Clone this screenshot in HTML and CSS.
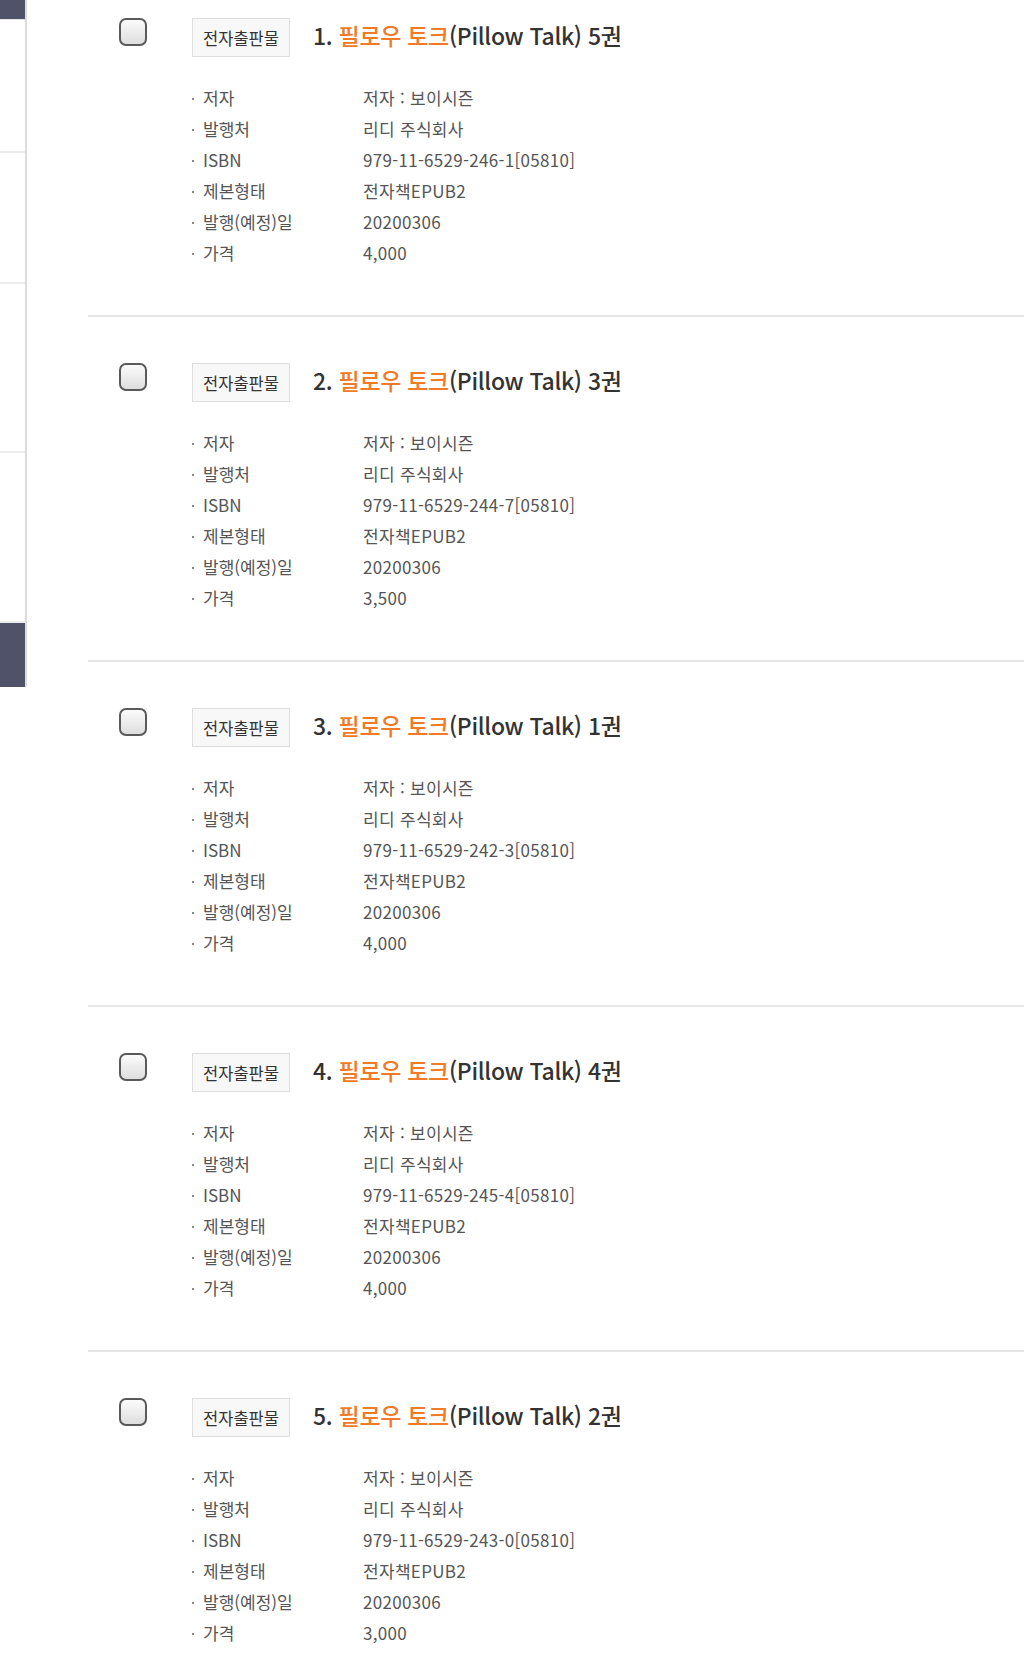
FILE: index.html
```html
<!DOCTYPE html>
<html lang="ko">
<head>
<meta charset="utf-8">
<title>검색 결과</title>
<link rel="stylesheet" href="styles.css">
</head>
<body>
<div class="page">
  <aside class="side">
    <div class="side-dark side-top"></div>
    <div class="side-cell h133"></div>
    <div class="side-cell h131"></div>
    <div class="side-cell h169"></div>
    <div class="side-cell h170"></div>
    <div class="side-dark side-bottom"></div>
  </aside>
  <main class="list">
    <div class="item first">
      <span class="check"></span>
      <div class="body">
        <div class="head"><span class="tag">전자출판물</span><h2 class="title">1. <em>필로우 토크</em>(Pillow Talk) 5권</h2></div>
        <ul class="meta">
          <li><span class="k">저자</span><span class="v">저자 : 보이시즌</span></li>
          <li><span class="k">발행처</span><span class="v">리디 주식회사</span></li>
          <li><span class="k">ISBN</span><span class="v">979-11-6529-246-1[05810]</span></li>
          <li><span class="k">제본형태</span><span class="v">전자책EPUB2</span></li>
          <li><span class="k">발행(예정)일</span><span class="v">20200306</span></li>
          <li><span class="k">가격</span><span class="v">4,000</span></li>
        </ul>
      </div>
    </div>
    <div class="item">
      <span class="check"></span>
      <div class="body">
        <div class="head"><span class="tag">전자출판물</span><h2 class="title">2. <em>필로우 토크</em>(Pillow Talk) 3권</h2></div>
        <ul class="meta">
          <li><span class="k">저자</span><span class="v">저자 : 보이시즌</span></li>
          <li><span class="k">발행처</span><span class="v">리디 주식회사</span></li>
          <li><span class="k">ISBN</span><span class="v">979-11-6529-244-7[05810]</span></li>
          <li><span class="k">제본형태</span><span class="v">전자책EPUB2</span></li>
          <li><span class="k">발행(예정)일</span><span class="v">20200306</span></li>
          <li><span class="k">가격</span><span class="v">3,500</span></li>
        </ul>
      </div>
    </div>
    <div class="item">
      <span class="check"></span>
      <div class="body">
        <div class="head"><span class="tag">전자출판물</span><h2 class="title">3. <em>필로우 토크</em>(Pillow Talk) 1권</h2></div>
        <ul class="meta">
          <li><span class="k">저자</span><span class="v">저자 : 보이시즌</span></li>
          <li><span class="k">발행처</span><span class="v">리디 주식회사</span></li>
          <li><span class="k">ISBN</span><span class="v">979-11-6529-242-3[05810]</span></li>
          <li><span class="k">제본형태</span><span class="v">전자책EPUB2</span></li>
          <li><span class="k">발행(예정)일</span><span class="v">20200306</span></li>
          <li><span class="k">가격</span><span class="v">4,000</span></li>
        </ul>
      </div>
    </div>
    <div class="item">
      <span class="check"></span>
      <div class="body">
        <div class="head"><span class="tag">전자출판물</span><h2 class="title">4. <em>필로우 토크</em>(Pillow Talk) 4권</h2></div>
        <ul class="meta">
          <li><span class="k">저자</span><span class="v">저자 : 보이시즌</span></li>
          <li><span class="k">발행처</span><span class="v">리디 주식회사</span></li>
          <li><span class="k">ISBN</span><span class="v">979-11-6529-245-4[05810]</span></li>
          <li><span class="k">제본형태</span><span class="v">전자책EPUB2</span></li>
          <li><span class="k">발행(예정)일</span><span class="v">20200306</span></li>
          <li><span class="k">가격</span><span class="v">4,000</span></li>
        </ul>
      </div>
    </div>
    <div class="item">
      <span class="check"></span>
      <div class="body">
        <div class="head"><span class="tag">전자출판물</span><h2 class="title">5. <em>필로우 토크</em>(Pillow Talk) 2권</h2></div>
        <ul class="meta">
          <li><span class="k">저자</span><span class="v">저자 : 보이시즌</span></li>
          <li><span class="k">발행처</span><span class="v">리디 주식회사</span></li>
          <li><span class="k">ISBN</span><span class="v">979-11-6529-243-0[05810]</span></li>
          <li><span class="k">제본형태</span><span class="v">전자책EPUB2</span></li>
          <li><span class="k">발행(예정)일</span><span class="v">20200306</span></li>
          <li><span class="k">가격</span><span class="v">3,000</span></li>
        </ul>
      </div>
    </div>
  </main>
</div>
</body>
</html>
```
FILE: styles.css
```css
* { box-sizing: border-box; }
html, body { margin: 0; padding: 0; background: #fff; }
body {
  font-family: "Noto Sans CJK KR", "Noto Sans", sans-serif;
  color: #333;
  width: 1024px;
  height: 1670px;
  overflow: hidden;
}
.page { display: flex; align-items: flex-start; }

.side {
  width: 27px;
  flex: none;
  border-right: 2px solid #dcdcdc;
  display: flex;
  flex-direction: column;
}
.side-dark { background: #4f5268; }
.side-top { height: 20px; border-bottom: 1px solid #e6e6e9; }
.side-bottom { height: 64px; }
.side-cell { border-bottom: 2px solid #ececec; }
.h133 { height: 133px; }
.h131 { height: 131px; }
.h169 { height: 169px; }
.h170 { height: 170px; }

.list { flex: 1; margin-left: 61px; }

.item {
  display: flex;
  border-top: 2px solid #e6e6e6;
  padding: 46px 0 47px 31px;
}
.item.first { border-top: 0; padding-top: 18px; }

.check {
  flex: none;
  width: 28px;
  height: 28px;
  border: 2px solid #5a5a5a;
  border-radius: 7px;
  background: linear-gradient(#fbfbfb, #dedede);
  margin-right: 45px;
}

.body { flex: 1; }
.head { display: flex; align-items: center; height: 39px; }
.tag {
  display: inline-flex;
  align-items: center;
  justify-content: center;
  width: 98px;
  height: 39px;
  border: 1px solid #dedede;
  background: #f8f8f8;
  font-size: 16.5px;
  color: #333;
}
.title {
  margin: 0 0 0 23px;
  padding-bottom: 4px;
  line-height: 1.2;
  font-size: 23px;
  font-weight: 500;
  color: #333;
  letter-spacing: -0.3px;
}
.title em { font-style: normal; color: #f27a27; }

.meta {
  list-style: none;
  margin: 25px 0 0;
  padding: 0;
}
.meta li {
  display: flex;
  height: 31px;
  line-height: 31px;
  font-size: 17px;
  color: #555;
}
.k {
  position: relative;
  width: 171px;
  padding-left: 11px;
}
.k::before {
  content: "";
  position: absolute;
  left: 0;
  top: 16px;
  width: 2px;
  height: 2px;
  background: #888;
}
.v { color: #555; letter-spacing: 0.3px; }
```
